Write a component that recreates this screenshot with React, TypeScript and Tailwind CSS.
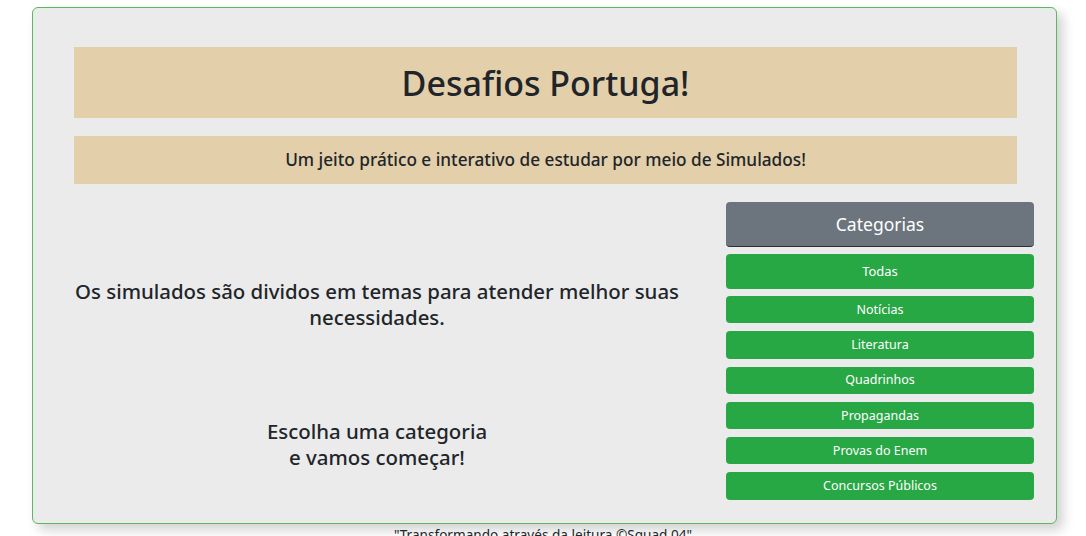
import React from 'react';

const categorias = [
  'Notícias',
  'Literatura',
  'Quadrinhos',
  'Propagandas',
  'Provas do Enem',
  'Concursos Públicos',
];

export default function App() {
  return (
    <div
      className="min-h-screen bg-white text-[#212529]"
      style={{ fontFamily: '"Segoe UI", "Noto Sans", sans-serif' }}
    >
      <div className="pt-[7px] pl-[32px] pr-[29px]">
        {/* Card */}
        <div className="h-[517px] rounded-md border border-[#5cb85c] bg-[#ebebeb] shadow-[6px_6px_12px_rgba(0,0,0,0.18)] pt-[39px]">
          <div className="mx-[41px] mr-[39px] flex h-[71px] items-center justify-center bg-[#e3cfa9]">
            <h1 className="text-[34px] font-medium leading-none">Desafios Portuga!</h1>
          </div>
          <div className="mx-[41px] mr-[39px] mt-[18px] flex h-[48px] items-center justify-center bg-[#e3cfa9]">
            <p className="text-[17.2px] font-medium">
              Um jeito prático e interativo de estudar por meio de Simulados!
            </p>
          </div>

          <div className="mt-[18px] flex pl-[41px] pr-[22px]">
            {/* Left column */}
            <div className="flex w-[606px] flex-col items-center text-center">
              <p className="mt-[76px] text-[20.4px] font-medium leading-[26px]">
                Os simulados são dividos em temas para atender melhor suas necessidades.
              </p>
              <p className="mt-[88px] text-[20.4px] font-medium leading-[26px]">
                Escolha uma categoria
                <br />e vamos começar!
              </p>
            </div>

            {/* Right column */}
            <div className="ml-auto flex w-[308px] flex-col gap-[8px]">
              <div className="flex h-[45px] items-center justify-center rounded border-b border-[#2b2f33] bg-[#6c757d] text-[17.5px] text-white">
                Categorias
              </div>
              <button className="-mt-[1px] h-[35px] rounded bg-[#28a745] pt-[1px] text-[13px] text-white">
                Todas
              </button>
              {categorias.map((c, i) => (
                <button
                  key={c}
                  className={`h-[27.3px] rounded bg-[#28a745] pt-[1px] text-[12.5px] text-white ${i === 0 ? '-mt-[1px]' : ''}`}
                >
                  {c}
                </button>
              ))}
            </div>
          </div>
        </div>
      </div>
      <p className="mt-[1px] text-center text-[13.6px] leading-5">
        "Transformando através da leitura ©Squad 04"
      </p>
    </div>
  );
}
